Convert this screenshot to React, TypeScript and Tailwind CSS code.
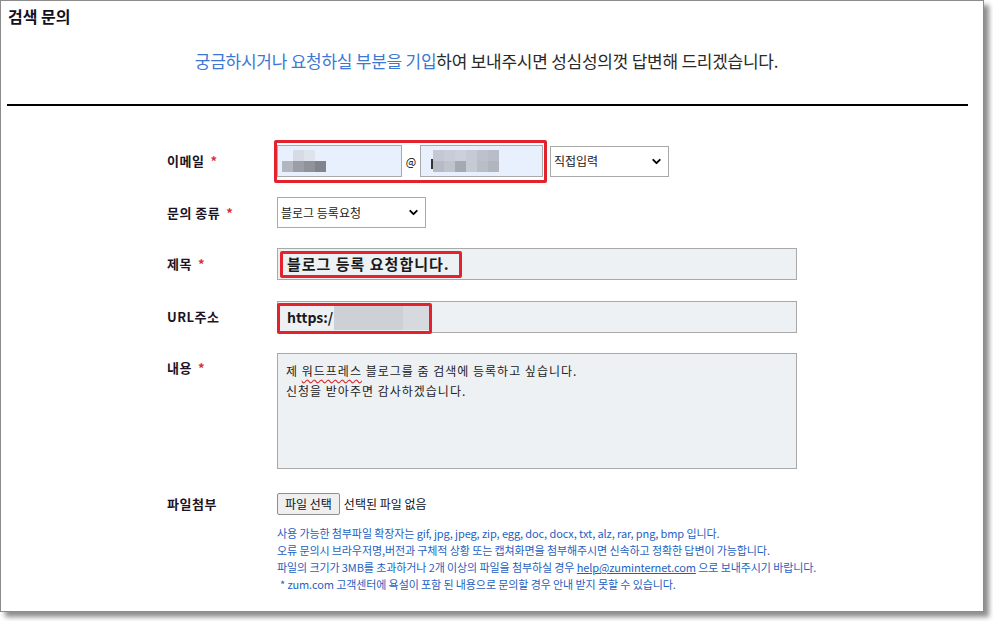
import { ChevronDown } from 'lucide-react';

const font = 'font-["Noto_Sans_CJK_KR","Noto_Sans",sans-serif]';

const Label = ({ text, required }: { text: string; required?: boolean }) => (
    <div className="w-[110px] shrink-0 text-[13px] font-bold text-[#1c1424] tracking-[0.5px]">
        {text}
        {required && <span className="ml-[6px] text-[#d9303b]">*</span>}
    </div>
);

// pixelated blur blocks that hide private values
const Mosaic = ({ rows }: { rows: string[][] }) => (
    <div className="flex flex-col">
        {rows.map((row, i) => (
            <div key={i} className="flex">
                {row.map((c, j) => (
                    <div key={j} className="w-[11px] h-[11px]" style={{ background: c }} />
                ))}
            </div>
        ))}
    </div>
);

const SelectBox = ({ value, width }: { value: string; width: string }) => (
    <div className={`${width} h-[31px] border border-[#a9a9a9] bg-white flex items-center justify-between pl-[3px] pr-[5px] text-[12px] text-[#222]`}>
        <span>{value}</span>
        <ChevronDown size={13} strokeWidth={3.5} className="text-black" />
    </div>
);

export default function App() {
    return (
        <div className={`w-[993px] h-[621px] bg-white ${font}`}>
            <div className="w-[984px] h-[612px] border border-[#8c8c8c] bg-white shadow-[5px_5px_5px_rgba(0,0,0,0.45)] flex flex-col">
                <h1 className="pl-[7px] pt-[4px] text-[16px] font-semibold text-[#14101c] leading-[22px]">검색 문의</h1>

                <p className="mt-[21px] pr-[11px] text-center text-[17px] tracking-[-0.25px] leading-[26px] text-[#2a2a2a]">
                    <span className="text-[#3b78d6]">궁금하시거나 요청하실 부분을 기입</span>하여 보내주시면 성심성의껏 답변해 드리겠습니다.
                </p>

                <div className="mt-[30px] ml-[6px] w-[961px] h-[2px] bg-black" />

                <div className="pl-[166px] flex flex-col">
                    {/* email */}
                    <div className="mt-[39px] flex items-center">
                        <Label text="이메일" required />
                        <div className="relative flex items-center">
                            <div className="absolute -left-[3px] -top-[5px] -right-[4px] -bottom-[6px] border-[3px] border-[#e2222d] rounded-[2px] pointer-events-none" />
                            <div className="w-[125px] h-[32px] border border-[#a9a9a9] bg-[#e8f0fe] flex items-center pl-[4px]">
                                <Mosaic
                                    rows={[
                                        ['transparent', '#d6dbe6', '#dfe3ec', 'transparent'],
                                        ['#b3b6be', '#9a9ea8', '#8f9299', '#80848c'],
                                    ]}
                                />
                            </div>
                            <span className="w-[18px] text-center text-[11px] text-black">@</span>
                            <div className="w-[123px] h-[32px] border border-[#a9a9a9] bg-[#e8f0fe] flex items-center pl-[10px]">
                                <span className="w-[2px] h-[10px] bg-[#333] mt-[6px]" />
                                <Mosaic
                                    rows={[
                                        ['#c3c8d3', '#c7ccd6', '#cbd0da', '#c5cad4', '#bcc1cb', '#b8bdc7'],
                                        ['#b6bbc5', '#bfc3cd', '#a5a9b2', '#c6cad3', '#b9bdc6', '#b1b5bf'],
                                    ]}
                                />
                            </div>
                        </div>
                        <div className="ml-[7px]">
                            <SelectBox value="직접입력" width="w-[119px]" />
                        </div>
                    </div>

                    {/* type */}
                    <div className="mt-[20px] flex items-center">
                        <Label text="문의 종류" required />
                        <SelectBox value="블로그 등록요청" width="w-[149px]" />
                    </div>

                    {/* subject */}
                    <div className="mt-[20px] flex items-center">
                        <Label text="제목" required />
                        <div className="relative w-[520px] h-[32px] border border-[#a9a9a9] bg-[#eef1f4] flex items-center pl-[9px] text-[15px] tracking-[1px] font-semibold text-[#1a1a1a]">
                            블로그 등록 요청합니다.
                            <div className="absolute left-[2px] top-[2px] w-[182px] h-[27px] border-[3px] border-[#e2222d] rounded-[2px]" />
                        </div>
                    </div>

                    {/* url */}
                    <div className="mt-[21px] flex items-center">
                        <Label text="URL주소" />
                        <div className="relative w-[520px] h-[32px] border border-[#a9a9a9] bg-[#eef1f4] flex items-center pl-[9px] text-[14px] font-semibold text-[#1a1a1a]">
                            https:/
                            <span className="ml-[1px] w-[69px] h-[26px] bg-[#cdd0d4]" />
                            <span className="w-[27px] h-[26px] bg-[#d6d9dd]" />
                            <div className="absolute -left-[1px] top-[1px] w-[155px] h-[31px] border-[3px] border-[#e2222d] rounded-[2px]" />
                        </div>
                    </div>

                    {/* content */}
                    <div className="mt-[20px] flex items-start">
                        <div className="pt-[5px]">
                            <Label text="내용" required />
                        </div>
                        <div className="w-[520px] h-[116px] border border-[#a9a9a9] bg-[#eef1f4] pl-[8px] pt-[7px] text-[12px] tracking-[1px] leading-[20px] text-[#222]">
                            <div>
                                제 <span className="underline decoration-wavy decoration-[#d93030] underline-offset-[3px]">워드프레스</span> 블로그를 줌 검색에 등록하고 싶습니다.
                            </div>
                            <div>신청을 받아주면 감사하겠습니다.</div>
                        </div>
                    </div>

                    {/* file */}
                    <div className="mt-[24px] flex items-center">
                        <Label text="파일첨부" />
                        <div className="flex items-center text-[12px] text-[#111]">
                            <button className="h-[22px] px-[7px] border border-[#8f8f8f] rounded-[2px] bg-[#efefef] text-[12px] text-[#111]">
                                파일 선택
                            </button>
                            <span className="ml-[4px]">선택된 파일 없음</span>
                        </div>
                    </div>

                    <div className="mt-[10px] pl-[110px] text-[11px] leading-[17px] tracking-[-0.1px] text-[#1f5fbf]">
                        <div>사용 가능한 첨부파일 확장자는 gif, jpg, jpeg, zip, egg, doc, docx, txt, alz, rar, png, bmp 입니다.</div>
                        <div>오류 문의시 브라우저명,버전과 구체적 상황 또는 캡쳐화면을 첨부해주시면 신속하고 정확한 답변이 가능합니다.</div>
                        <div>
                            파일의 크기가 3MB를 초과하거나 2개 이상의 파일을 첨부하실 경우 <span className="underline">help@zuminternet.com</span> 으로 보내주시기 바랍니다.
                        </div>
                        <div className="pl-[3px]">* zum.com 고객센터에 욕설이 포함 된 내용으로 문의할 경우 안내 받지 못할 수 있습니다.</div>
                    </div>
                </div>
            </div>
        </div>
    );
}
